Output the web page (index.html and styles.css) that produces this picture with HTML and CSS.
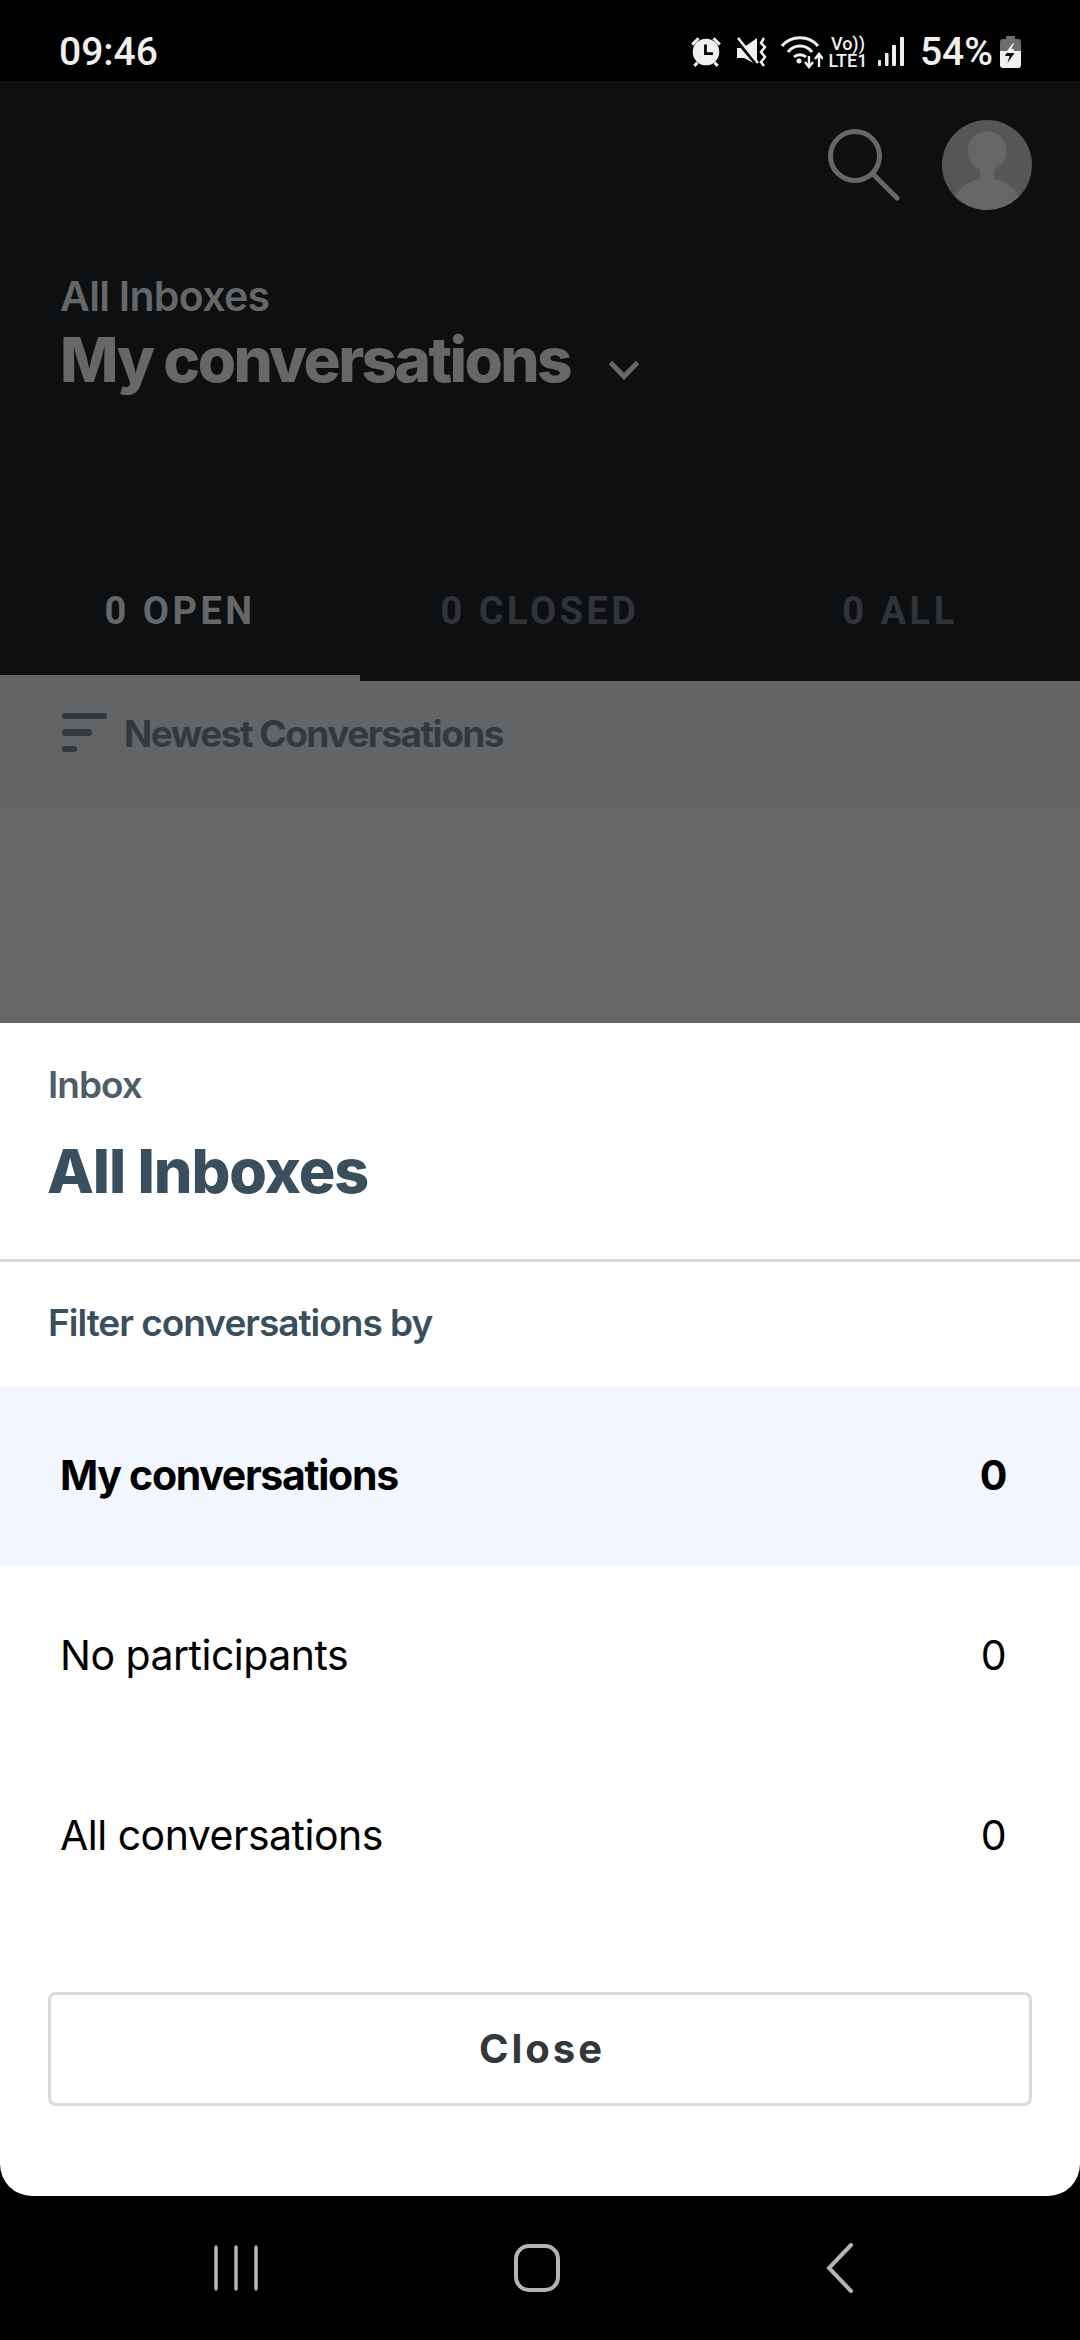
FILE: index.html
```html
<!DOCTYPE html>
<html lang="en">
<head>
<meta charset="utf-8">
<title>Inbox</title>
<link rel="stylesheet" href="styles.css">
</head>
<body>
<div class="phone">
  <header class="status">
    <span class="clock">09:46</span>
    <div class="status-icons">
      <svg class="si alarm" width="32" height="34" viewBox="0 0 30 32"><g fill="#f0f0f0"><circle cx="15" cy="16" r="12.500"/><path d="M1 8l6-6 2 2-6 6zM29 8l-6-6-2 2 6 6zM3 28l3-3 2 2-3 3zM27 28l-3-3-2 2 3 3z"/></g><path d="M14.500 9v8.500h7" fill="none" stroke="#000" stroke-width="2.600"/></svg>
      <svg class="si mute" width="30" height="30" viewBox="0 0 30 30"><path d="M0 11h6l14-10v27L7 21H0z" fill="#f0f0f0"/><path d="M-1 2l22 26" stroke="#000" stroke-width="4.500"/><path d="M1 1l20 25" stroke="#f0f0f0" stroke-width="2.600"/><path d="M27 1l-3 5 4 4-4 5 4 5-4 5 3 4" fill="none" stroke="#f0f0f0" stroke-width="2.500"/></svg>
      <svg class="si wifi" width="42" height="34" viewBox="0 0 42 34"><g fill="none" stroke="#f0f0f0" stroke-width="3"><path d="M1 11C10 0 28 0 37 11"/><path d="M7 17C13 9 25 9 31 17"/><path d="M13 22c3-3 9-3 12 0"/></g><circle cx="18" cy="26" r="2.500" fill="#f0f0f0"/><path d="M28 21v11M24 27l4 5 4-5M38 32V20M34 24l4-5 4 5" fill="none" stroke="#f0f0f0" stroke-width="2.400"/></svg>
      <div class="volte"><span>Vo))</span><span>LTE1</span></div>
      <svg class="si signal" width="28" height="30" viewBox="0 0 28 30"><g fill="#f0f0f0"><rect x="1" y="23" width="3" height="6" rx="1"/><rect x="8" y="16" width="3.500" height="13" rx="1"/><rect x="15" y="8" width="4" height="21" rx="1"/><rect x="23" y="0" width="4" height="29" rx="1"/></g></svg>
      <span class="pct">54%</span>
      <svg class="si batt" width="21" height="32" viewBox="0 0 21 32"><path d="M6 0h9v3h3a3 3 0 0 1 3 3v9H0V6a3 3 0 0 1 3-3h3z" fill="#6d6d6d"/><path d="M0 15h21v14a3 3 0 0 1-3 3H3a3 3 0 0 1-3-3z" fill="#f0f0f0"/><path d="M13 7l-6 8h6.500l.500-2h-3l3-5z" fill="#f0f0f0"/><path d="M6.500 17h8l-7 10 2-7H5z" fill="#111"/></svg>
    </div>
  </header>

  <main class="app">
    <section class="top">
      <div class="top-actions">
        <svg class="search" width="72" height="72" viewBox="0 0 72 72"><circle cx="27" cy="27" r="24.500" fill="none" stroke="#666768" stroke-width="5"/><path d="M45 45l24 24" stroke="#666768" stroke-width="5" stroke-linecap="round"/></svg>
        <svg class="avatar" width="90" height="90" viewBox="0 0 90 90"><circle cx="45" cy="45" r="45" fill="#565656"/><clipPath id="c"><circle cx="45" cy="45" r="45"/></clipPath><g clip-path="url(#c)" fill="#666"><ellipse cx="45" cy="31" rx="19.500" ry="20"/><rect x="38" y="44" width="14" height="20"/><ellipse cx="45" cy="89" rx="35" ry="31"/></g></svg>
      </div>
      <div class="titles">
        <div class="crumb">All Inboxes</div>
        <div class="title-row">
          <h1 class="title">My conversations</h1>
          <svg class="chev" width="32" height="20" viewBox="0 0 32 20"><path d="M2.500 2.500L16 16.500 29.500 2.500" fill="none" stroke="#666768" stroke-width="5"/></svg>
        </div>
      </div>
    </section>
    <nav class="tabs">
      <div class="tab active">0 OPEN</div>
      <div class="tab">0 CLOSED</div>
      <div class="tab">0 ALL</div>
    </nav>
    <div class="sortbar">
      <span class="sort-icon"><i class="b1"></i><i class="b2"></i><i class="b3"></i></span>
      <span class="sort-label">Newest Conversations</span>
    </div>
    <div class="empty"></div>
  </main>

  <section class="sheet">
    <div class="sheet-head">
      <div class="sheet-label">Inbox</div>
      <h2 class="sheet-title">All Inboxes</h2>
    </div>
    <div class="filter-label">Filter conversations by</div>
    <ul class="rows">
      <li class="row selected"><span>My conversations</span><span>0</span></li>
      <li class="row"><span>No participants</span><span>0</span></li>
      <li class="row"><span>All conversations</span><span>0</span></li>
    </ul>
    <div class="actions"><button class="close">Close</button></div>
  </section>

  <footer class="nav">
    <svg class="nav-bars" width="46" height="46" viewBox="0 0 46 46"><g stroke="#b4b4b4" stroke-width="3.500" stroke-linecap="round"><path d="M3 2v42M23 2v42M43 2v42"/></g></svg>
    <svg class="nav-home" width="46" height="48" viewBox="0 0 46 48"><rect x="2" y="2" width="42" height="44" rx="13" fill="none" stroke="#b4b4b4" stroke-width="4"/></svg>
    <svg class="nav-back" width="30" height="50" viewBox="0 0 30 50"><path d="M26 2L4 25l22 23" fill="none" stroke="#b4b4b4" stroke-width="4" stroke-linecap="round"/></svg>
  </footer>
</div>
</body>
</html>
```
FILE: styles.css
```css
* { box-sizing: border-box; }
html, body { margin: 0; padding: 0; background: #000; }
.phone { width: 1080px; height: 2340px; display: flex; flex-direction: column; overflow: hidden; font-family: "Inter", "Liberation Sans", sans-serif; }

.status { height: 81px; flex: none; background: #000; display: flex; align-items: center; justify-content: space-between; padding: 22px 59px 0 59px; }
.clock { font-family: Roboto, sans-serif; font-size: 39px; font-weight: 500; color: #f0f0f0; }
.status-icons { display: flex; align-items: center; }
.si { display: block; }
.mute { margin-left: 15px; }
.wifi { margin-left: 14px; }
.volte { margin-left: 6px; width: 38px; display: flex; flex-direction: column; align-items: center; font-family: Roboto, sans-serif; font-size: 18px; line-height: 17px; font-weight: 500; color: #f0f0f0; }
.signal { margin-left: 10px; }
.pct { margin-left: 15px; font-family: Roboto, sans-serif; font-size: 39px; font-weight: 500; color: #f0f0f0; }
.batt { margin-left: 7px; }

.app { height: 942px; flex: none; display: flex; flex-direction: column; background: #666; }
.top { height: 494px; background: #0d0f11; padding: 39px 48px 0 60px; }
.top-actions { display: flex; justify-content: flex-end; align-items: flex-start; gap: 42px; }
.search { margin-top: 9px; }
.titles { margin-top: 61px; }
.crumb { font-size: 41px; font-weight: 600; letter-spacing: -0.700px; color: #666768; line-height: 50px; }
.title-row { display: flex; align-items: center; gap: 38px; margin-top: 1px; }
.title { margin: 0; font-size: 62px; font-weight: 800; letter-spacing: -2.600px; color: #666768; line-height: 76px; }
.chev { margin-top: 20px; }

.tabs { height: 106px; background: #0d0f11; display: grid; grid-template-columns: repeat(3, 1fr); }
.tab { font-family: Roboto, sans-serif; font-size: 38px; font-weight: 700; letter-spacing: 3.500px; color: #303438; text-align: center; line-height: 72px; height: 106px; }
.tab.active { color: #666768; border-bottom: 6px solid #626466; }

.sortbar { height: 121px; background: #626466; display: flex; align-items: center; padding: 0 0 16px 62px; gap: 17px; }
.sort-icon { width: 45px; display: flex; flex-direction: column; gap: 10px; margin-top: -2px; }
.sort-icon i { display: block; height: 6.500px; border-radius: 4px; background: #33383d; }
.b1 { width: 45px; } .b2 { width: 30px; } .b3 { width: 15px; }
.sort-label { font-size: 37px; font-weight: 700; letter-spacing: -1.500px; color: #33383d; }
.empty { flex: 1; background: #666; }

.sheet { height: 1173px; flex: none; background: #fff; border-radius: 0 0 32px 32px; display: flex; flex-direction: column; }
.sheet-head { height: 239px; border-bottom: 3px solid #d5dcdc; padding: 39px 48px 0; }
.sheet-label { font-size: 37px; font-weight: 600; letter-spacing: -1px; color: #4e5d68; line-height: 46px; }
.sheet-title { margin: 27px 0 0 -1px; font-size: 61px; font-weight: 800; letter-spacing: -1.100px; color: #394f5e; line-height: 72px; }
.filter-label { height: 124px; padding: 38px 48px 0; font-size: 37px; font-weight: 600; letter-spacing: -1px; color: #394f5e; }
.rows { list-style: none; margin: 0; padding: 0; }
.row { height: 180px; display: flex; align-items: center; justify-content: space-between; padding: 0 74px 2px 60px; font-size: 41px; font-weight: 400; letter-spacing: -0.500px; color: #000; }
.row.selected { background: #f2f7ff; font-weight: 700; letter-spacing: -1.300px; }
.actions { padding: 66px 48px 0; }
.close { width: 100%; height: 114px; padding: 0 0 2px 4px; background: #fff; border: 3px solid #d5dcdc; border-radius: 8px; font-family: "Inter", sans-serif; font-size: 40px; font-weight: 700; letter-spacing: 3px; color: #33383d; }

.nav { flex: 1; background: #000; display: flex; align-items: center; padding: 0 0 0 213px; }
.nav-home { margin-left: 255px; }
.nav-back { margin-left: 265px; }
```
